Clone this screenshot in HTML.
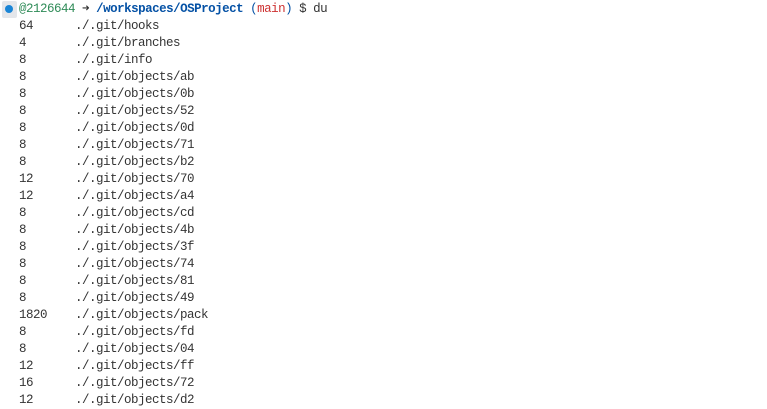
<!DOCTYPE html>
<html><head><style>
body{margin:0;background:#fff;width:767px;height:409px;overflow:hidden;font-family:"Liberation Mono",monospace;font-size:12.5px;letter-spacing:-0.5px;color:#333}
.l{position:absolute;left:19px;height:17px;line-height:17px;white-space:pre}
.g{color:#2e8b57}.b{color:#0451a5;font-weight:bold}.r{color:#cd3131}.p{color:#0451a5}
.hl{position:absolute;left:2px;top:1px;width:15px;height:17px;background:#e4e6ea;border-radius:2px}
.dot{position:absolute;left:5px;top:5px;width:8px;height:8px;border-radius:50%;background:#1a85d6}
</style></head><body>
<div class="hl"></div><div class="dot"></div>
<div class="l" style="top:1px"><span class="g">@2126644</span> <span style="font-weight:bold">➜</span> <span class="b">/workspaces/OSProject</span> <span class="p">(</span><span class="r">main</span><span class="p">)</span> $ du</div>
<div class="l" style="top:18px">64      ./.git/hooks</div>
<div class="l" style="top:35px">4       ./.git/branches</div>
<div class="l" style="top:52px">8       ./.git/info</div>
<div class="l" style="top:69px">8       ./.git/objects/ab</div>
<div class="l" style="top:86px">8       ./.git/objects/0b</div>
<div class="l" style="top:103px">8       ./.git/objects/52</div>
<div class="l" style="top:120px">8       ./.git/objects/0d</div>
<div class="l" style="top:137px">8       ./.git/objects/71</div>
<div class="l" style="top:154px">8       ./.git/objects/b2</div>
<div class="l" style="top:171px">12      ./.git/objects/70</div>
<div class="l" style="top:188px">12      ./.git/objects/a4</div>
<div class="l" style="top:205px">8       ./.git/objects/cd</div>
<div class="l" style="top:222px">8       ./.git/objects/4b</div>
<div class="l" style="top:239px">8       ./.git/objects/3f</div>
<div class="l" style="top:256px">8       ./.git/objects/74</div>
<div class="l" style="top:273px">8       ./.git/objects/81</div>
<div class="l" style="top:290px">8       ./.git/objects/49</div>
<div class="l" style="top:307px">1820    ./.git/objects/pack</div>
<div class="l" style="top:324px">8       ./.git/objects/fd</div>
<div class="l" style="top:341px">8       ./.git/objects/04</div>
<div class="l" style="top:358px">12      ./.git/objects/ff</div>
<div class="l" style="top:375px">16      ./.git/objects/72</div>
<div class="l" style="top:392px">12      ./.git/objects/d2</div>
</body></html>
